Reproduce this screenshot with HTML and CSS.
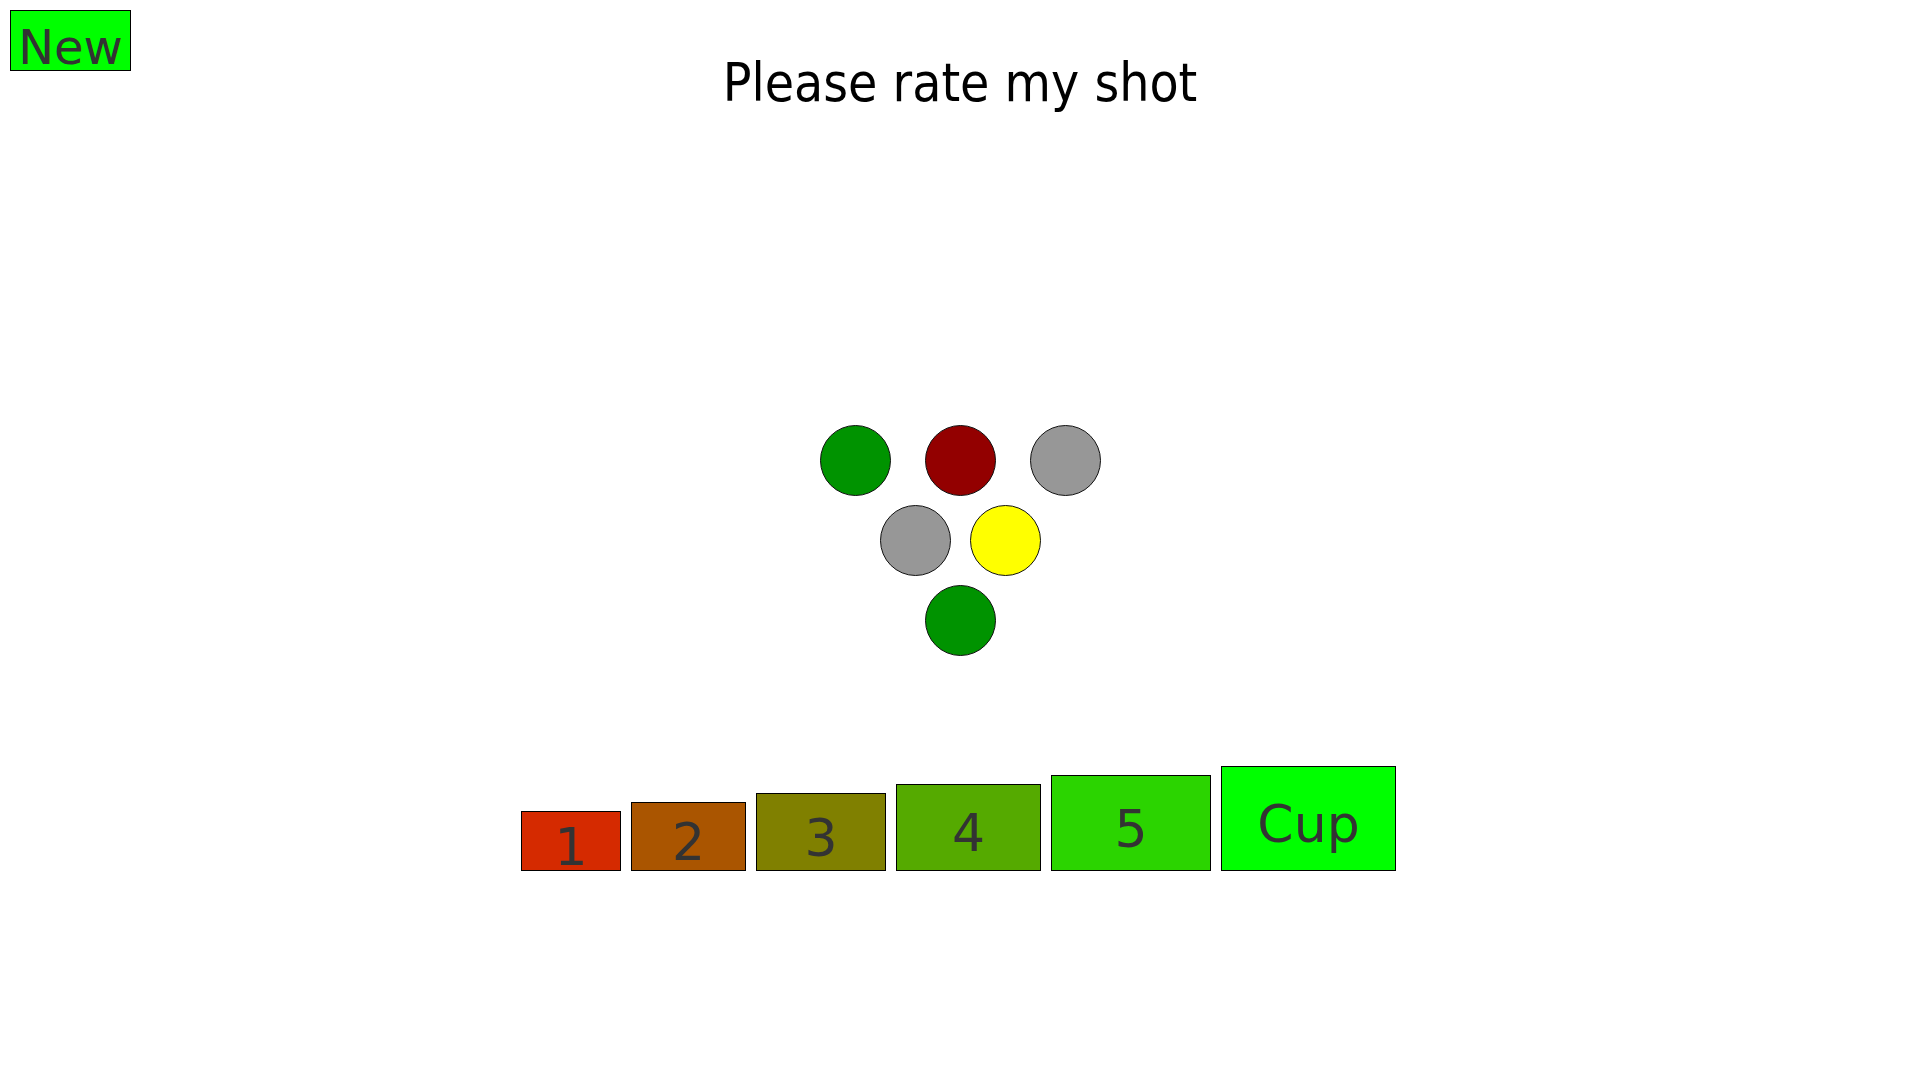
FILE: index.html
```html
<!DOCTYPE html>
<html>
<head>
<meta charset="utf-8">
<title>Please rate my shot</title>
<link rel="stylesheet" href="styles.css">
</head>
<body>
<header class="header">
  <div class="header-left"><button class="new-btn">New</button></div>
  <h1 class="title">Please rate my shot</h1>
  <div class="header-right"></div>
</header>
<main class="main">
  <section class="rack">
    <div class="rack-row row-3">
      <span class="cup cup-green"></span>
      <span class="cup cup-red"></span>
      <span class="cup cup-gray"></span>
    </div>
    <div class="rack-row row-2">
      <span class="cup cup-gray"></span>
      <span class="cup cup-yellow"></span>
    </div>
    <div class="rack-row row-1">
      <span class="cup cup-green"></span>
    </div>
  </section>
  <section class="ratings">
    <button class="rate rate-1">1</button>
    <button class="rate rate-2">2</button>
    <button class="rate rate-3">3</button>
    <button class="rate rate-4">4</button>
    <button class="rate rate-5">5</button>
    <button class="rate rate-cup">Cup</button>
  </section>
</main>
</body>
</html>
```
FILE: styles.css
```css
html, body {
  margin: 0;
  padding: 0;
  background: #ffffff;
}

body {
  width: 1920px;
  height: 1080px;
  overflow: hidden;
  font-family: "DejaVu Sans", sans-serif;
}

.header {
  display: grid;
  grid-template-columns: 1fr auto 1fr;
  align-items: start;
  padding: 10px 10px 0 10px;
}

.header-left {
  display: flex;
}

.new-btn {
  box-sizing: border-box;
  width: 121px;
  height: 61px;
  margin: 0;
  padding: 12px 0 0 0;
  border: 1px solid #000;
  background: #00ff00;
  color: #333333;
  font-family: "DejaVu Sans", sans-serif;
  font-size: 48px;
  line-height: 56px;
  display: flex;
  align-items: center;
  justify-content: center;
}

.title {
  margin: 43px 0 0 0;
  font-family: "DejaVu Sans Condensed", "DejaVu Sans", sans-serif;
  font-stretch: condensed;
  font-weight: normal;
  font-size: 53px;
  line-height: 60px;
  color: #000;
  white-space: nowrap;
}

.main {
  display: flex;
  flex-direction: column;
  align-items: center;
}

.rack {
  margin-top: 312px;
  display: flex;
  flex-direction: column;
  align-items: center;
  gap: 9px;
}

.rack-row {
  display: flex;
  justify-content: center;
}

.row-3 { gap: 34px; }
.row-2 { gap: 19px; }

.cup {
  box-sizing: border-box;
  display: block;
  width: 71px;
  height: 71px;
  border-radius: 50%;
  border: 1px solid #111;
}

.cup-green { background: #009300; }
.cup-red { background: #930000; }
.cup-gray { background: #979797; }
.cup-yellow { background: #ffff00; }

.ratings {
  margin-top: 110px;
  margin-right: 3px;
  display: flex;
  align-items: flex-end;
  gap: 10px;
}

.rate {
  box-sizing: border-box;
  margin: 0;
  padding: 11px 0 0 0;
  border: 1px solid #000;
  color: #333333;
  font-family: "DejaVu Sans", sans-serif;
  font-size: 52px;
  line-height: 60px;
  display: flex;
  align-items: center;
  justify-content: center;
}

.rate-1 { width: 100px; height: 60px; background: #d52a00; }
.rate-2 { width: 115px; height: 69px; background: #aa5500; }
.rate-3 { width: 130px; height: 78px; background: #808000; }
.rate-4 { width: 145px; height: 87px; background: #55aa00; }
.rate-5 { width: 160px; height: 96px; background: #2bd400; }
.rate-cup { width: 175px; height: 105px; background: #00ff00; }
```
